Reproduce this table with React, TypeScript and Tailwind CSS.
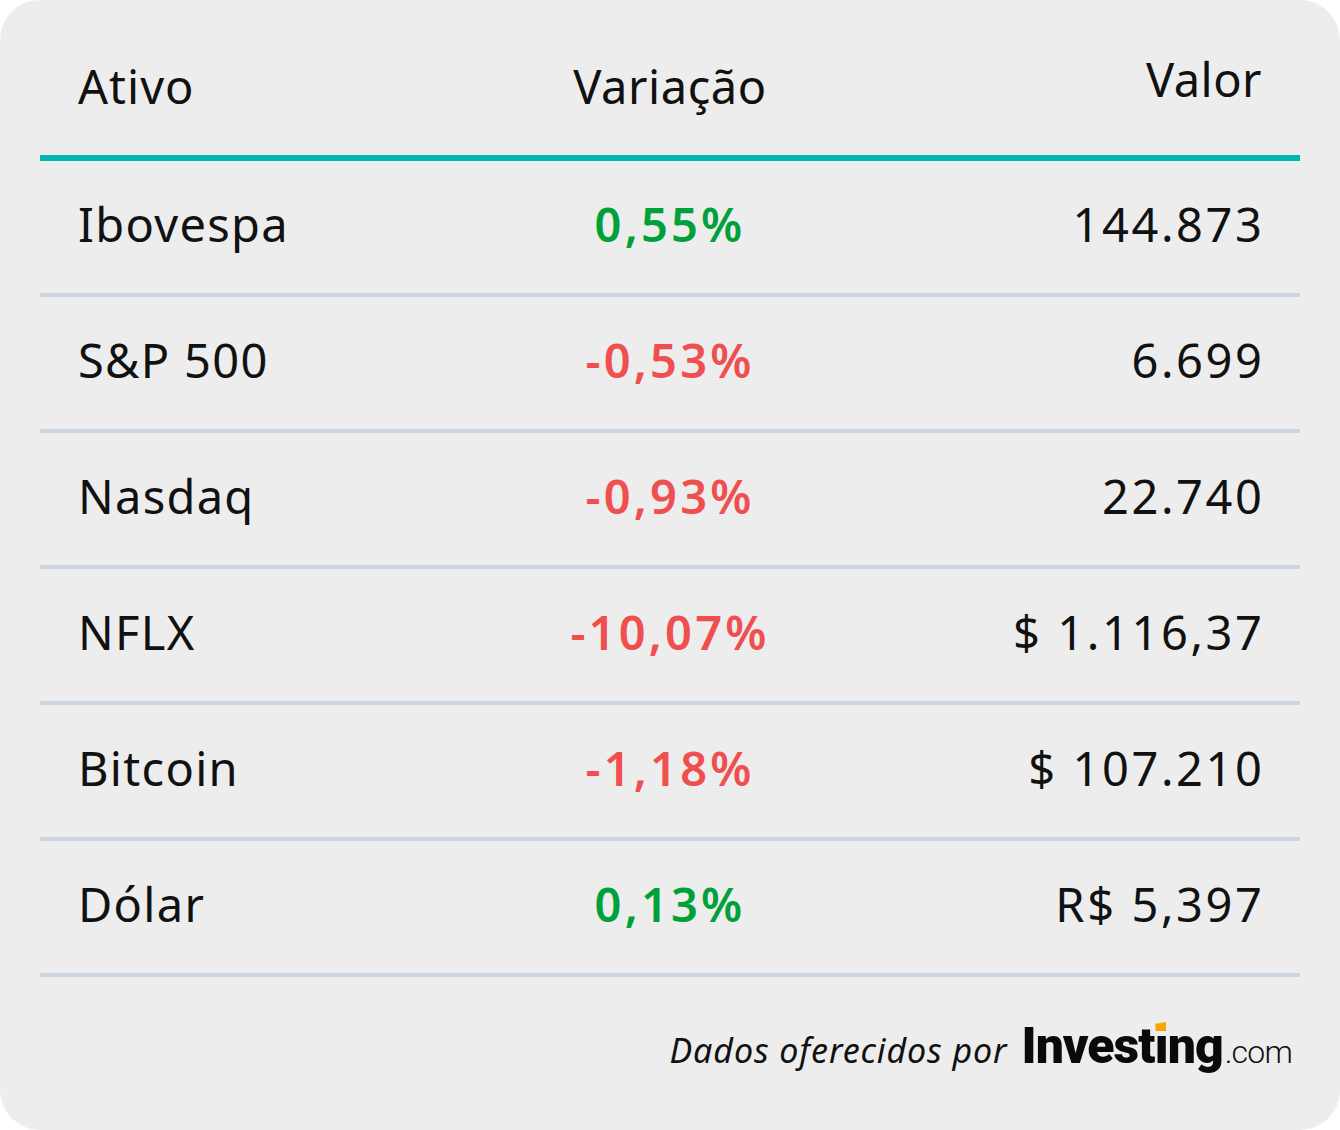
const rows = [
  { name: "Ibovespa", change: "0,55%", up: true, value: "144.873" },
  { name: "S&P 500", change: "-0,53%", up: false, value: "6.699" },
  { name: "Nasdaq", change: "-0,93%", up: false, value: "22.740" },
  { name: "NFLX", change: "-10,07%", up: false, value: "$ 1.116,37" },
  { name: "Bitcoin", change: "-1,18%", up: false, value: "$ 107.210" },
  { name: "Dólar", change: "0,13%", up: true, value: "R$ 5,397" },
];

const InvestingLogo = () => (
  <div className="flex items-baseline">
    <span className="font-['Roboto',sans-serif] font-black text-[50px] leading-none tracking-[-1px] text-[#0a0a0a]">
      Invest
      <span className="relative inline-block">
        ı
        <span className="absolute left-[1px] top-[1px] h-[9px] w-[11px] bg-[#f7a600] [clip-path:polygon(0_20%,100%_0,100%_100%,0_100%)]" />
      </span>
      ng
    </span>
    <span className="ml-[2px] font-['Roboto',sans-serif] font-light text-[32px] leading-none tracking-[-0.8px] text-[#111]">.com</span>
  </div>
);

export default function App() {
  return (
    <div className="w-[1340px] h-[1130px] bg-white">
      <div className="h-full w-full rounded-[40px] bg-[#ededed] px-[40px] font-['Noto_Sans',sans-serif] text-[#111]">
        {/* header */}
        <div className="grid h-[155px] grid-cols-3 items-end px-[38px] pb-[45px] text-[47px] leading-none">
          <div className="text-left tracking-[1px]">Ativo</div>
          <div className="text-center tracking-[0.6px]">Variação</div>
          <div className="mb-[7px] text-right tracking-[0.5px]">Valor</div>
        </div>
        <div className="h-[6px] bg-[#00b8ae]" />
        {rows.map((r) => (
          <div key={r.name} className="grid h-[136px] grid-cols-3 items-center border-b-4 border-[#cbd3e1] px-[38px] pb-[5px] text-[47px] leading-none">
            <div className="text-left tracking-[1.3px]">{r.name}</div>
            <div className={`text-center font-semibold tracking-[3.2px] ${r.up ? "text-[#00a03a]" : "text-[#ef4f4f]"}`}>{r.change}</div>
            <div className="text-right tracking-[2.6px] -mr-[2.6px]">{r.value}</div>
          </div>
        ))}
        {/* footer */}
        <div className="flex justify-end items-baseline gap-[14px] pt-[44px] pr-[8px]">
          <span className="italic text-[34px] tracking-[0.9px] leading-none">Dados oferecidos por</span>
          <InvestingLogo />
        </div>
      </div>
    </div>
  );
}
